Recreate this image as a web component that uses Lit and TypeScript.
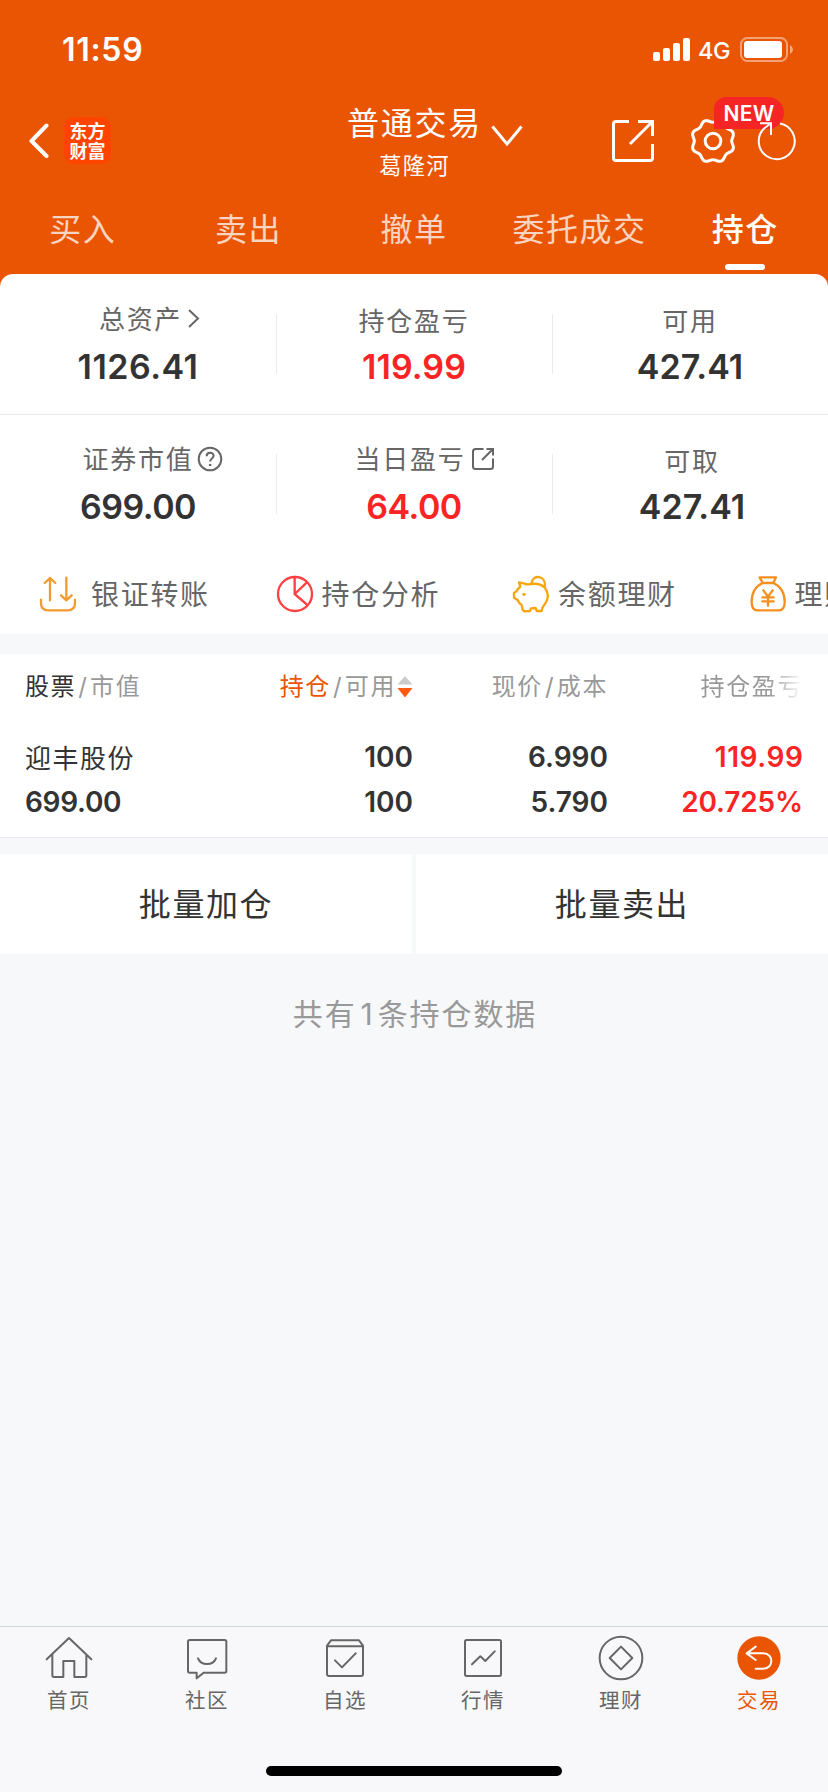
import { LitElement, html, css, svg, nothing } from "lit";
import { customElement, state } from "lit/decorators.js";
import { classMap } from "lit/directives/class-map.js";

const gearPath = (() => {
  const points: string[] = [];
  for (let i = 0; i < 96; i++) {
    const a = (i / 96) * Math.PI * 2;
    const r = 20.2 - 1.5 * Math.cos(8 * a);
    points.push(`${(23 + r * Math.cos(a)).toFixed(2)} ${(23 + r * Math.sin(a)).toFixed(2)}`);
  }
  return `M${points.join("L")}Z`;
})();

const labelIcons: Record<string, unknown> = {
  arrow: html`<svg class="mini arrow" width="14" height="22" viewBox="0 0 14 22"><path d="M2 3L11 11.5L2 20" /></svg>`,
  help: html`<svg class="mini help" width="26" height="26" viewBox="0 0 26 26"><circle cx="13" cy="13" r="11.3" /><path d="M9.6 10.2C9.6 5.6 16.6 5.6 16.6 9.8C16.6 12.4 13.1 12.6 13.1 15.6" /><path class="dot" d="M13.1 18V20" /></svg>`,
  share: html`<svg class="mini share" width="24" height="24" viewBox="0 0 24 24"><path d="M12.5 2H4.5Q2 2 2 4.500V19.500Q2 22 4.500 22H19.500Q22 22 22 19.500V11.500M15.500 2H22V8.500M22 2L11 13" /></svg>`,
};

interface Stat {
  label: string;
  value: string;
  up?: boolean;
  icon?: string;
  shift?: string;
}

const stats: Stat[][] = [
  [
    { label: "总资产", value: "1126.41", icon: "arrow", shift: "s-total wide" },
    { label: "持仓盈亏", value: "119.99", up: true },
    { label: "可用", value: "427.41" },
  ],
  [
    { label: "证券市值", value: "699.00", icon: "help", shift: "s-market tight" },
    { label: "当日盈亏", value: "64.00", up: true, icon: "share", shift: "s-day tight" },
    { label: "可取", value: "427.41", shift: "s-draw" },
  ],
];

const actions = [
  {
    label: "银证转账",
    cls: "transfer",
    icon: svg`<svg width="38" height="38" viewBox="117 74 114 114" stroke="#f29b2f"><path d="M150 150V83M134 98L150 83L166 98M199 82V150M183 135L199 150L215 135M123 148V158Q123 180 145 180H203Q225 180 225 158V148" /></svg>`,
  },
  {
    label: "持仓分析",
    cls: "",
    icon: svg`<svg width="38" height="38" viewBox="828 75 114 114" stroke="#ff4143"><circle cx="885" cy="132" r="51" /><path d="M884 81V132L920 98M884 132L920 163" /></svg>`,
  },
  {
    label: "余额理财",
    cls: "",
    icon: svg`<svg width="38" height="38" viewBox="312 75 114 114" stroke="#f9a50d"><path d="M333 97L350 101Q356 104 362 103C390 98 402 103 411 114C420 126 421 139 417 150C413 162 405 168 403 174L401 183H386L383 174L369 175L366 183L349 184L344 179L341 165C334 161 331 155 329 150L318 143V129L325 124C329 117 334 112 337 110Z" /><path d="M371 99C374 72 413 76 411 108" /><circle cx="348" cy="133" r="5" fill="#f9a50d" stroke="none" /></svg>`,
  },
  {
    label: "理财",
    cls: "",
    icon: svg`<svg width="38" height="38" viewBox="1021 74 114 114" stroke="#f68f20"><path d="M1053 81H1102L1094 98H1062ZM1062 98C1040 108 1029 130 1029 155C1029 172 1034 180 1046 180H1111C1123 180 1128 172 1128 155C1128 130 1116 108 1094 98M1064 120L1078 139L1092 120M1078 139V166M1061 141H1095M1061 153H1095" /></svg>`,
  },
];

const navItems = [
  { label: "首页", icon: svg`<svg width="50" height="48" viewBox="132 72 150 144"><path d="M140 148L207 84L274 148M157 134V196Q157 201 162 201H190V153H223V201H254Q259 201 259 196V134" /></svg>` },
  { label: "社区", icon: svg`<svg width="50" height="48" viewBox="546 72 150 144"><path d="M569 90H674Q679 90 679 95V183Q679 188 674 188H611L590 205V188H569Q564 188 564 183V95Q564 90 569 90ZM594 145Q601 162 621 162Q641 162 648 145" /></svg>` },
  { label: "自选", icon: svg`<svg width="50" height="48" viewBox="960 72 150 144"><path d="M981 107L993 91H1077L1089 107V192Q1089 198 1083 198H987Q981 198 981 192ZM981 109H1089M1005 151L1026 172L1067 130" /></svg>` },
  { label: "行情", icon: svg`<svg width="50" height="48" viewBox="150 72 150 144"><rect x="171" y="90" width="108" height="108" rx="5" /><path d="M192 163L217 139L232 153L260 124" /></svg>` },
  { label: "理财", icon: svg`<svg width="50" height="48" viewBox="564 72 150 144"><circle cx="639" cy="144" r="64" /><path d="M639 110L673 144L639 178L605 144Z" /></svg>` },
  { label: "交易", on: true, icon: svg`<svg width="50" height="48" viewBox="978 72 150 144"><circle cx="1053" cy="144" r="65" fill="#ea5504" stroke="none" /><path stroke="#fff" d="M1043 110L1016 130L1043 150M1017 130H1066C1098 130 1098 176 1066 176H1043" /></svg>` },
];

@customElement("app-root")
export class AppRoot extends LitElement {
  @state() private tab = "持仓";

  static styles = css`
    :host {
      display: flex;
      flex-direction: column;
      height: 1792px;
      width: 828px;
      overflow: hidden;
      background: #f7f8fa;
      color: #333;
      font-family: Inter, "Noto Sans CJK SC", sans-serif;
      font-size: 26px;
      white-space: nowrap;
    }
    * { box-sizing: border-box; }
    svg { display: block; flex: none; fill: none; }
    .head { background: #ea5504; color: #fff; padding-bottom: 16px; }
    .status { height: 88px; display: flex; align-items: center; padding: 11px 34px 0 62px; }
    .time { font-size: 32px; font-weight: 600; line-height: 40px; flex: 1; letter-spacing: .7px; padding-top: 1px; }
    .net { font-size: 23.5px; font-weight: 500; line-height: 40px; width: 33px; letter-spacing: -.3px; margin: 3px 9px 0 8px; }
    .bar { height: 106px; display: flex; align-items: center; }
    .left { width: 340px; display: flex; align-items: center; padding-left: 28px; }
    .back { stroke: #fff; stroke-width: 4; stroke-linecap: round; stroke-linejoin: round; }
    .logo {
      width: 47px; height: 47px; margin-left: 14px; border-radius: 10px; background: #f40;
      font-family: "Noto Sans CJK SC", sans-serif; font-weight: 700; font-size: 18px; line-height: 20px;
      text-align: center; padding-top: 3px; margin-top: -2px;
    }
    .title { width: 148px; text-align: center; align-self: flex-start; padding: 14px 0 0 1px; }
    .t1 { font-size: 32px; letter-spacing: 1.8px; line-height: 44px; }
    .t2 { font-size: 22.3px; letter-spacing: 1.2px; line-height: 42px; margin-top: -1px; }
    .line { stroke: #fff; stroke-width: 3; }
    .chev { margin: -13px 0 0 2px; }
    .ext { margin-left: 87px; }
    .gear { position: relative; margin-left: 35px; }
    .badge {
      position: absolute; left: 24px; top: -21px; width: 70px; height: 32px;
      border-radius: 12px 16px 16px 0; background: #f52525; color: #fff;
      font-size: 21px; font-weight: 600; line-height: 33px; text-align: center; letter-spacing: .3px;
    }
    .reload { position: relative; margin-left: 20px; }
    .tabs { display: grid; grid-template-columns: repeat(5, 1fr); height: 80px; }
    .tab { font-size: 32px; letter-spacing: 1.5px; line-height: 72px; text-align: center; color: rgba(255, 255, 255, .75); }
    .tab.on { color: #fff; font-weight: 500; }
    .tab.on::after { content: ""; display: block; width: 40px; height: 6px; border-radius: 3px; background: #fff; margin: -2px auto 0; }
    .card { background: #fff; border-radius: 13px 13px 0 0; margin-top: -16px; }
    .row { height: 140px; display: flex; padding-top: 26px; }
    .row + .row { box-shadow: inset 0 1px #ebebeb; }
    .cell { flex: 0 0 276px; display: flex; flex-direction: column; align-items: center; }
    .cell + .cell { background: linear-gradient(#ebebeb, #ebebeb) 0 14px / 1px 60px no-repeat; }
    .label { height: 42px; line-height: 40px; display: flex; align-items: center; color: #666; letter-spacing: 1.7px; padding-top: 2px; }
    .value { font-size: 34px; font-weight: 600; line-height: 50px; letter-spacing: .1px; }
    .wide .value { letter-spacing: .5px; }
    .tight .value { letter-spacing: -.5px; }
    .up { color: #fa2424; }
    .mini { stroke: #666; stroke-width: 2; margin-bottom: 2px; }
    .mini .dot { stroke-width: 2.4; }
    .arrow { margin-left: 5px; margin-bottom: 3px; }
    .help { margin-left: 4px; }
    .share { margin-left: 6px; }
    .s-total .label { padding: 0 0 3px 24px; }
    .s-market .label { padding: 0 0 2px 30px; }
    .s-day .label { padding: 0 0 2px 22px; }
    .s-draw { padding-left: 4px; }
    .actions { display: flex; height: 80px; align-items: center; padding-left: 39px; overflow: hidden; }
    .action { display: flex; align-items: center; flex: none; width: 236.500px; gap: 8px; font-size: 28px; letter-spacing: 1.7px; color: #666; line-height: 40px; }
    .action span { padding-top: 2px; }
    .action.transfer { gap: 14px; }
    .action svg { stroke-width: 7; stroke-linecap: round; stroke-linejoin: round; }
    .table { margin-top: 20px; background: #fff; height: 184px; border-bottom: 1px solid #e9ebee; padding: 0 25px; }
    .grid { display: grid; grid-template-columns: 205px 183px 195px 195px; }
    .th { height: 64px; padding-top: 2px; line-height: 62px; font-size: 24px; color: #999; letter-spacing: 1.6px; display: flex; justify-content: flex-end; }
    .th:first-child { justify-content: flex-start; }
    .th .dark { color: #333; }
    .th .hot { color: #ea5504; }
    .slash { margin: 0 1.6px 0 2px; }
    .sort { align-self: center; margin: 0 0 0 1px; }
    .fade { -webkit-mask-image: linear-gradient(90deg, #000 160px, transparent 195px); mask-image: linear-gradient(90deg, #000 160px, transparent 195px); }
    .body { padding-top: 17px; grid-auto-rows: 45px; }
    .td { font-size: 28px; font-weight: 600; line-height: 45px; text-align: right; }
    .td:first-child { text-align: left; letter-spacing: -.3px; }
    .td.up { letter-spacing: -.15px; }
    .body .td.up { letter-spacing: .6px; margin-right: -.6px; }
    .td.name { font-size: 26px; font-weight: 400; letter-spacing: 1.5px; line-height: 47px; }
    .batch { display: grid; grid-template-columns: 1fr 1fr; gap: 4px; margin-top: 16px; }
    .btn { background: #fff; height: 100px; line-height: 101px; text-align: center; font-size: 32px; letter-spacing: 1.6px; }
    .count { flex: 1; text-align: center; color: #999; font-size: 30px; letter-spacing: 1.9px; line-height: 120px; padding-left: 2px; }
    .num { margin: 0 3px 0 4px; }
    .nav { height: 166px; background: #f8f8fa; border-top: 1px solid #d3d8de; display: flex; flex-direction: column; align-items: center; }
    .items { display: grid; grid-template-columns: repeat(6, 138px); height: 139px; padding-top: 7px; align-content: start; }
    .item { display: flex; flex-direction: column; align-items: center; gap: 1px; font-size: 20.5px; letter-spacing: 1.4px; line-height: 36px; color: #666; }
    .item svg { stroke: #666; stroke-width: 6; stroke-linejoin: round; stroke-linecap: round; }
    .item.on { color: #ea5504; }
    .home { width: 296px; height: 10px; border-radius: 5px; background: #000; }
  `;

  private renderHead() {
    return html`
      <div class="head">
        <div class="status">
          <div class="time">11:59</div>
          <svg width="37" height="24" viewBox="0 0 37 24" fill="#fff"><g fill="#fff"><rect y="14" width="7" height="9" rx="2" /><rect x="10" y="10" width="7" height="13" rx="2" /><rect x="20" y="5" width="7" height="18" rx="2" /><rect x="30" y="0" width="7" height="23" rx="2" /></g></svg>
          <div class="net">4G</div>
          <svg width="54" height="26" viewBox="0 0 54 26"><rect x="1" y="1" width="46" height="23" rx="6.500" stroke="#fff" stroke-opacity=".45" stroke-width="2" /><rect x="4" y="4" width="38" height="17" rx="3" fill="#fff" /><path d="M50 8Q53 10 53 12.500Q53 15 50 17Z" fill="#fff" fill-opacity=".5" /></svg>
        </div>
        <div class="bar">
          <div class="left">
            <svg class="back" width="22" height="36" viewBox="0 0 22 36"><path d="M18.500 2.500L3.500 18L18.500 33" /></svg>
            <div class="logo">东方<br />财富</div>
          </div>
          <div class="title"><div class="t1">普通交易</div><div class="t2">葛隆河</div></div>
          <svg class="line chev" width="34" height="24" viewBox="490 123 34 24"><path d="M492.500 126.500L507 144L521.500 126.500" /></svg>
          <svg class="line ext" width="44" height="44" viewBox="611 119 44 44"><path d="M629 121.500H616Q613.500 121.500 613.500 124V158Q613.500 160.500 616 160.500H650Q652.500 160.500 652.500 158V144M638 121.500H652.500V136M652.500 121.500L630 144" /></svg>
          <div class="gear">
            <svg class="line" width="46" height="46" viewBox="0 0 46 46"><path d=${gearPath} /><circle cx="23" cy="23" r="7.800" /></svg>
            <div class="badge">NEW</div>
          </div>
          <svg class="line reload" width="40" height="46" viewBox="756 117 40 46"><path stroke-width="2" d="M780 122.500A18 18 0 1 1 764 127.500M760 122.300H771V134M764 127.500L771 122.300" /></svg>
        </div>
        <div class="tabs">
          ${["买入", "卖出", "撤单", "委托成交", "持仓"].map(
            (t) => html`<div class=${classMap({ tab: true, on: this.tab === t })} @click=${() => (this.tab = t)}>${t}</div>`
          )}
        </div>
      </div>
    `;
  }

  private renderCard() {
    return html`
      <div class="card">
        ${stats.map(
          (row) => html`<div class="row">
            ${row.map(
              (s) => html`<div class="cell ${s.shift ?? ""}">
                <div class="label">${s.label}${s.icon ? labelIcons[s.icon] : nothing}</div>
                <div class=${classMap({ value: true, up: !!s.up })}>${s.value}</div>
              </div>`
            )}
          </div>`
        )}
        <div class="actions">
          ${actions.map((a) => html`<div class="action ${a.cls}">${a.icon}<span>${a.label}</span></div>`)}
        </div>
      </div>
    `;
  }

  private renderTable() {
    return html`
      <div class="table">
        <div class="grid">
          <div class="th"><span class="dark">股票</span><span class="slash">/</span><span>市值</span></div>
          <div class="th">
            <span class="hot">持仓</span><span class="slash">/</span><span>可用</span>
            <svg class="sort" width="16" height="22" viewBox="0 0 16 22"><path d="M8 0L15.500 8.500H.500Z" fill="#ccc" /><path d="M8 21.500L15.500 12H.500Z" fill="#ff5b10" /></svg>
          </div>
          <div class="th"><span>现价</span><span class="slash">/</span><span>成本</span></div>
          <div class="th fade"><span>持仓盈亏</span></div>
        </div>
        <div class="grid body">
          <div class="td name">迎丰股份</div><div class="td">100</div><div class="td">6.990</div><div class="td up">119.99</div>
        </div>
        <div class="grid">
          <div class="td">699.00</div><div class="td">100</div><div class="td">5.790</div><div class="td up">20.725%</div>
        </div>
      </div>
      <div class="batch"><div class="btn">批量加仓</div><div class="btn">批量卖出</div></div>
      <div class="count">共有<span class="num">1</span>条持仓数据</div>
    `;
  }

  render() {
    return html`
      ${this.renderHead()} ${this.renderCard()} ${this.renderTable()}
      <div class="nav">
        <div class="items">
          ${navItems.map((n) => html`<div class=${classMap({ item: true, on: !!n.on })}>${n.icon}<span>${n.label}</span></div>`)}
        </div>
        <div class="home"></div>
      </div>
    `;
  }
}
